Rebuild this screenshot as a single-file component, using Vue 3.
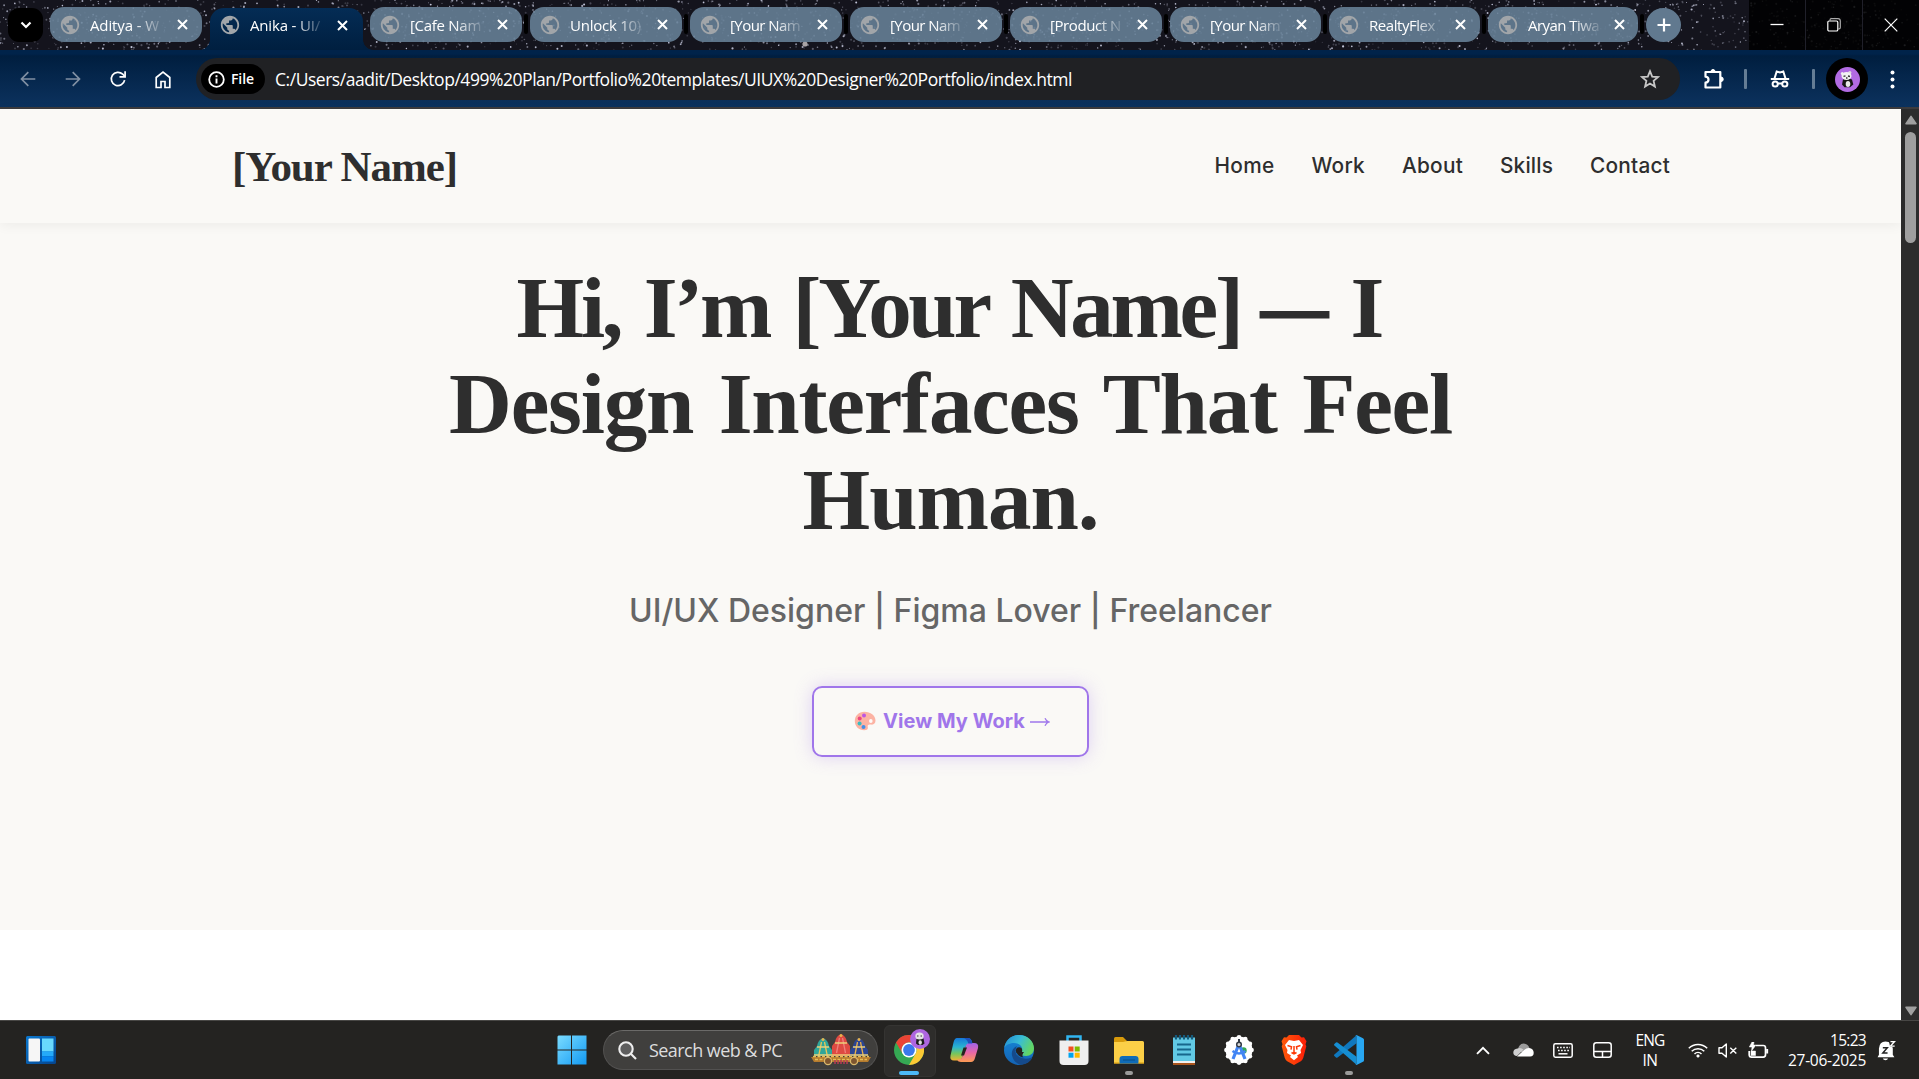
<script setup>
const tabs = [
  { title: 'Aditya - W', w: 69, size: 160 },
  { title: 'Anika - UI/', w: 70, size: 160, active: true },
  { title: '[Cafe Nam', w: 71, size: 160 },
  { title: 'Unlock 10)', w: 71, size: 160 },
  { title: '[Your Nam', w: 70, size: 160 },
  { title: '[Your Nam', w: 70, size: 160 },
  { title: '[Product N', w: 71, size: 160 },
  { title: '[Your Nam', w: 70, size: 159 },
  { title: 'RealtyFlex', w: 66, size: 159 },
  { title: 'Aryan Tiwa', w: 71, size: 158 },
]

const nav = [
  { label: 'Home', w: 60 },
  { label: 'Work', w: 53.5 },
  { label: 'About', w: 61 },
  { label: 'Skills', w: 53 },
  { label: 'Contact', w: 80 },
]

// Adjusts tracking so a label occupies its intended width.
const vFit = {
  mounted(el, { value }) {
    const natural = el.getBoundingClientRect().width
    const count = el.textContent.trim().length
    el.style.letterSpacing = `${((value - natural) / count).toFixed(4)}px`
  },
}

// Deterministic star field behind the tab strip.
let seed = 4711
const rand = () => {
  seed = (seed * 1664525 + 1013904223) % 4294967296
  return seed / 4294967296
}
const stars = Array.from({ length: 2600 }, () => {
  const bright = rand()
  return {
    x: (rand() * 1919).toFixed(1),
    y: (rand() * 50).toFixed(1),
    r: (0.5 + rand() * 0.6).toFixed(2),
    o: (0.2 + bright * bright * 0.8).toFixed(2),
  }
})

const teeth = Array.from({ length: 12 }, (_, i) => {
  const a = (i * Math.PI) / 6
  return { x: 15 + Math.cos(a) * 12.6, y: 15 + Math.sin(a) * 12.6 }
})
</script>

<template>
  <div class="screen">
    <header class="strip">
      <svg class="stars" width="1919" height="50" aria-hidden="true">
        <circle v-for="(s, i) in stars" :key="i" :cx="s.x" :cy="s.y" :r="s.r" fill="#c3c6da" :opacity="s.o" />
        <circle cx="805" cy="44" r="2.6" fill="#d9d4d4" opacity=".75" />
      </svg>
      <div class="tab-search">
        <svg width="12" height="8" viewBox="0 0 12 8"><path d="M1.500 1.500 6 6l4.500-4.500" fill="none" stroke="#fff" stroke-width="2.200" /></svg>
      </div>
      <div class="tabs">
        <div v-for="(t, i) in tabs" :key="i" class="slot" :class="{ active: t.active, divided: i > 1 }" :style="{ width: t.size + 'px' }">
          <div class="tab">
            <svg class="globe" width="22" height="22" viewBox="0 0 24 24">
              <path fill="currentColor" d="M12 2C6.480 2 2 6.480 2 12s4.480 10 10 10 10-4.480 10-10S17.520 2 12 2zm-1 17.930c-3.950-.49-7-3.850-7-7.930 0-.62.08-1.210.21-1.790L9 15v1c0 1.100.9 2 2 2v1.930zm6.900-2.540c-.26-.81-1-1.390-1.900-1.390h-1v-3c0-.55-.45-1-1-1H8v-2h2c.55 0 1-.45 1-1V7h2c1.100 0 2-.9 2-2v-.41c2.930 1.190 5 4.060 5 7.410 0 2.080-.8 3.970-2.100 5.390z" />
            </svg>
            <span class="title"><span v-fit="t.w" class="fit">{{ t.title }}</span></span>
            <svg class="close" width="11" height="11" viewBox="0 0 11 11"><path d="M1 1l9 9M10 1l-9 9" stroke="#fff" stroke-width="2" /></svg>
          </div>
          <template v-if="t.active">
            <i class="flare left"></i><i class="flare right"></i>
          </template>
        </div>
      </div>
      <div class="new-tab">
        <svg width="14" height="14" viewBox="0 0 14 14"><path d="M7 .5v13M.5 7h13" stroke="#fff" stroke-width="2.200" /></svg>
      </div>
      <div class="controls">
        <div><svg width="14" height="14" viewBox="0 0 14 14"><path d="M.5 6.500h13" stroke="#fff" stroke-width="1.300" /></svg></div>
        <div>
          <svg width="14" height="14" viewBox="0 0 14 14" fill="none" stroke="#fff" stroke-width="1.200">
            <path d="M3 2.500V2Q3 .7 4.300.7H11Q13.300.7 13.300 3v6.500q0 1.300-1.300 1.300h-.5" stroke="#aaa" />
            <rect x=".8" y="3" width="10" height="10" rx="1.300" />
          </svg>
        </div>
        <div><svg width="14" height="14" viewBox="0 0 14 14"><path d="M.7.7l12.600 12.600M13.300.7L.7 13.300" stroke="#fff" stroke-width="1.200" /></svg></div>
      </div>
    </header>

    <div class="toolbar">
      <div class="tool dim"><svg width="16" height="16" viewBox="0 0 16 16"><path d="M15.300 8H2M8.300 1.200 1.500 8l6.800 6.800" /></svg></div>
      <div class="tool dim"><svg width="16" height="16" viewBox="0 0 16 16"><path d="M.7 8H14M7.700 1.200 14.500 8l-6.800 6.800" /></svg></div>
      <div class="tool"><svg width="18" height="18" viewBox="0 0 18 18"><path d="M15.600 10.200A6.700 6.700 0 1 1 13.700 4.200L15.500 6" stroke-width="2.100" /><path d="M16.100 1.200v5.600h-5.600" stroke-width="2.100" /></svg></div>
      <div class="tool"><svg width="18" height="19" viewBox="0 0 18 19"><path d="M2.200 17.500V7.500L9 2l6.800 5.500v10H11v-6H7v6z" stroke-width="2.100" /></svg></div>
      <div class="omnibox">
        <div class="chip">
          <svg width="17" height="17" viewBox="0 0 17 17" fill="none" stroke="#fff"><circle cx="8.500" cy="8.500" r="7.300" stroke-width="1.800" /><path d="M8.500 7.600v5M8.500 4.300v1.900" stroke-width="1.900" /></svg>
          <span v-fit="23" class="fit">File</span>
        </div>
        <span class="url"><span v-fit="797" class="fit">C:/Users/aadit/Desktop/499%20Plan/Portfolio%20templates/UIUX%20Designer%20Portfolio/index.html</span></span>
        <svg class="fav" width="20" height="20" viewBox="0 0 20 20"><path d="M10 2.200l2.200 5.400 5.800.5-4.400 3.800 1.300 5.700L10 14.500l-4.900 3.100 1.300-5.700L2 8.100l5.800-.5z" fill="none" stroke="#c7c7c7" stroke-width="1.800" /></svg>
      </div>
      <div class="right-tools">
        <svg width="22" height="22" viewBox="0 0 22 22" fill="none" stroke="#fff" stroke-width="2.200" stroke-linejoin="round"><path d="M2.500 4h14.800v15.500H2.500v-4.800q3-.4 3-3t-3-3z" /><path d="M8 3.500a2 2 0 0 1 4 0zM18 9a2 2 0 0 1 0 4.500z" fill="#fff" stroke-width="1" /></svg>
        <i class="sep"></i>
        <svg width="20" height="18" viewBox="0 0 20 18" fill="none" stroke="#fff" stroke-width="2"><path d="M.8 9h18.400M4.500 8.500 6.700 1.500l3.300 1 3.300-1 2.200 7" /><circle cx="5.200" cy="14" r="2.600" /><circle cx="14.800" cy="14" r="2.600" /><path d="M8 13.500h4" /></svg>
        <i class="sep"></i>
        <div class="avatar">
          <svg width="25" height="25" viewBox="0 0 25 25"><circle cx="12.500" cy="12.500" r="12.500" fill="#b26be3" /><path d="M8 12.500q4.500-2 9 0l1.300 5-3.300 2.800H9.500L7 17.500z" fill="#161616" /><ellipse cx="13" cy="17" rx="2.300" ry="3" fill="#e9e9e9" /><circle cx="7.300" cy="6.500" r="1.500" fill="#eee" /><circle cx="14.800" cy="5.500" r="1.600" fill="#ddd" /><ellipse cx="11.500" cy="9" rx="5" ry="4" fill="#f2f2f2" /><path d="M8.500 9.300l2-.5M13 9l2 .5M11 11h1.500" stroke="#333" stroke-width="1.300" /></svg>
        </div>
        <svg width="5" height="19" viewBox="0 0 5 19" fill="#fff"><circle cx="2.500" cy="2.500" r="2" /><circle cx="2.500" cy="9.500" r="2" /><circle cx="2.500" cy="16.500" r="2" /></svg>
      </div>
    </div>

    <div class="viewport">
      <div class="page">
        <div class="site-header">
          <div class="logo"><span v-fit="225" class="fit">[Your Name]</span></div>
          <nav>
            <a v-for="n in nav" :key="n.label"><span v-fit="n.w" class="fit">{{ n.label }}</span></a>
          </nav>
        </div>
        <section class="hero">
          <h1>
            <span class="line first"><span v-fit="724" class="fit">Hi, I’m [Your Name]</span> <span class="dash">—</span> <span class="fit">I</span></span>
            <span class="line"><span v-fit="1003" class="fit">Design Interfaces That Feel</span></span>
            <span class="line"><span v-fit="296" class="fit">Human.</span></span>
          </h1>
          <p><span v-fit="643" class="fit">UI/UX Designer | Figma Lover | Freelancer</span></p>
          <a class="cta">
            <svg width="22" height="20" viewBox="0 0 22 20">
              <path d="M10.500.7C4.800.7.8 4.700.8 10c0 5.400 4.200 9.300 9.300 9.300 3 0 4.300-1.300 3.700-3.300-.6-1.900.7-3 2.900-2.500 2.700.6 4.800-.8 4.800-4C21.500 4.300 16.500.7 10.500.7z" fill="#fcb3a3" />
              <ellipse cx="16.800" cy="10" rx="1.800" ry="2.100" fill="#fffaf8" />
              <circle cx="10" cy="4.400" r="2" fill="#bd55e3" /><circle cx="5.700" cy="7.600" r="2" fill="#ec477f" /><circle cx="5.600" cy="12.600" r="2" fill="#36bcc2" /><circle cx="9.500" cy="15.900" r="2" fill="#448fe8" />
            </svg>
            <span class="cta-text"><span v-fit="142" class="fit">View My Work</span></span>
            <svg class="arrow" width="20" height="10" viewBox="0 0 20 10"><path d="M0 5h18.500M15 1.200Q16.200 4.200 19 5q-2.800.8-4 3.800" fill="none" stroke="#9f77eb" stroke-width="1.300" /></svg>
          </a>
        </section>
        <section class="next"></section>
      </div>
      <div class="scrollbar">
        <svg width="12" height="10" viewBox="0 0 12 10"><path d="M6 1.300 11 8.700H1z" fill="#a0a0a0" stroke="#a0a0a0" stroke-width="1.500" stroke-linejoin="round" /></svg>
        <i class="thumb"></i>
        <svg width="12" height="10" viewBox="0 0 12 10"><path d="M6 8.700 11 1.300H1z" fill="#a0a0a0" stroke="#a0a0a0" stroke-width="1.500" stroke-linejoin="round" /></svg>
      </div>
    </div>

    <footer class="taskbar">
      <div class="widgets">
        <svg width="30" height="28" viewBox="0 0 30 28"><defs><linearGradient id="wd" x1="0" y1="0" x2="1" y2="1"><stop stop-color="#0a78d0" /><stop offset="1" stop-color="#06448c" /></linearGradient></defs><rect width="30" height="28" rx="1.500" fill="url(#wd)" /><rect x="2.500" y="2.500" width="11.500" height="23" rx="1" fill="#f6f6f6" /><rect x="16" y="2.500" width="11.500" height="13" fill="#69d9fd" /><rect x="16" y="15.300" width="11.500" height="5" fill="#25aaf9" /><rect x="16" y="20.300" width="11.500" height="5.200" fill="#0785f0" /></svg>
      </div>
      <div class="center">
        <svg class="start" width="30" height="30" viewBox="0 0 30 30"><defs><linearGradient id="wn" x1="0" y1="0" x2="1" y2="1" gradientUnits="objectBoundingBox"><stop stop-color="#7bdcff" /><stop offset="1" stop-color="#1299f3" /></linearGradient></defs><path d="M1.500.5H14v14H.5v-13zM15 .5h14.500v14H15zM.5 15.500H14v14H.5zM15 15.500h14.500v14H15z" fill="url(#wn)" /></svg>
        <div class="search">
          <svg width="19" height="19" viewBox="0 0 19 19" fill="none" stroke="#eee" stroke-width="2.100"><circle cx="8" cy="8" r="6.700" fill="#5e5e5e" /><path d="M12.800 12.800l5.200 5.200" /></svg>
          <span class="search-text"><span v-fit="133" class="fit">Search web &amp; PC</span></span>
          <svg class="art" width="62" height="32" viewBox="0 0 62 32">
            <path d="M1 23h60l-3 5H4z" fill="#b57b2e" />
            <path d="M3 22.500h56M5 25.500h52" stroke="#e6bd57" stroke-width="1.500" stroke-dasharray="3 1.500" />
            <g v-for="(c, i) in [['#2fa69a', '#e6c65a', 13, 4], ['#de4a42', '#f07e7a', 31, 0], ['#2b4593', '#e7b04b', 49, 4]]" :key="i">
              <path :d="`M${c[2]} ${c[3]}q5 2 6 8l3 4V22H${c[2] - 9}V${c[3] + 12}l3-4q1-6 6-8z`" :fill="c[0]" />
              <path :d="`M${c[2] - 1.5} ${c[3] + 4}l-3 15M${c[2] + 1.5} ${c[3] + 4}l3 15`" :stroke="c[1]" stroke-width="1.300" />
              <path :d="`M${c[2] - 6} ${c[3] + 9}h12M${c[2] - 9} 21h18`" stroke="#ecd079" stroke-width="1.400" />
              <circle :cx="c[2]" :cy="c[3] + 1.5" r="1.500" fill="#e8b34c" />
            </g>
            <g fill="#7d5530" stroke="#d9b86c" stroke-width="1.300"><circle cx="18" cy="27" r="3.600" /><circle cx="44" cy="27" r="3.600" /></g>
            <path d="M25 26v4m3-4v4m3-4v4m3-4v4m3-4v4" stroke="#b63b54" stroke-width="1.500" />
          </svg>
        </div>
        <div class="apps">
          <div class="app current">
            <svg width="30" height="30" viewBox="0 0 30 30"><circle cx="15" cy="15" r="15" fill="#35a853" /><path d="M2 7.500A15 15 0 0 1 28 7.500H15A7.500 7.500 0 0 0 8.500 18.700z" fill="#ea4335" /><path d="M28 7.500A15 15 0 0 1 15 30l6.500-11.200A7.500 7.500 0 0 0 15 7.500z" fill="#fcc934" /><circle cx="15" cy="15" r="7.500" fill="#fff" /><circle cx="15" cy="15" r="5.900" fill="#3b79ec" /></svg>
            <svg class="badge" width="20" height="20" viewBox="0 0 20 20"><circle cx="10" cy="10" r="10" fill="#ae66df" /><path d="M6.500 9.500h7l1 5-2 1.500H8l-2-1.500z" fill="#1c1c1c" /><ellipse cx="9.500" cy="7" rx="4.200" ry="3.500" fill="#e4e4e4" /><ellipse cx="10.200" cy="13.500" rx="1.700" ry="2.200" fill="#ddd" /><path d="M7 7h1.500M10.500 7H12" stroke="#333" /></svg>
            <i class="run wide"></i>
          </div>
          <div class="app">
            <svg width="30" height="30" viewBox="0 0 30 30"><defs><linearGradient id="ca" x1="0" y1="0" x2="0" y2="1"><stop stop-color="#1678d8" /><stop offset=".4" stop-color="#29b3d1" /><stop offset=".7" stop-color="#77c65c" /><stop offset="1" stop-color="#f1b332" /></linearGradient><linearGradient id="cb" x1="0" y1="0" x2="0" y2="1"><stop stop-color="#a063e8" /><stop offset=".5" stop-color="#e767a7" /><stop offset="1" stop-color="#fc9b52" /></linearGradient></defs><path d="M8 3h11q3 0 4 4l.7 2.500H20q-3 0-4 3.500l-3 10q-.8 2.500-4 2.500H5q-4.500 0-3.500-5l3-13Q5.500 3 8 3z" fill="url(#ca)" /><path d="M22 27H12q-3 0-4-2.500h2q2.500 0 3.400-3l3-9.500q.9-4 4.600-4h4q5 0 4 5l-3 10Q25 27 22 27z" fill="url(#cb)" /><path d="M13 3h6q3 0 4 4l.3 1.500h-4q-1.300-5.500-6.300-5.500z" fill="#1c50bc" /><path d="M14.500 12.500h3.500l-3 8h-3z" fill="#25221f" /></svg>
          </div>
          <div class="app">
            <svg width="30" height="30" viewBox="0 0 30 30"><defs><linearGradient id="ea" x1="0" y1="0" x2="1" y2=".4"><stop stop-color="#2289d5" /><stop offset=".55" stop-color="#39bdd5" /><stop offset="1" stop-color="#62d565" /></linearGradient><linearGradient id="eb" x1="0" y1="0" x2="0" y2="1"><stop stop-color="#1688d8" /><stop offset="1" stop-color="#1463b4" /></linearGradient></defs><circle cx="15" cy="15" r="15" fill="url(#eb)" /><path d="M.2 13C1.500 5 7.500 0 15 0c8.500 0 15 6 15 13.300 0 5-3.800 7.700-7.800 7.700-3.700 0-6-1.300-6-2.500 0-1 2-1.300 2-4.500C18 10.500 14 8 10 8 5 8 1.500 10.500.2 13z" fill="url(#ea)" /><path d="M12 11.500c-3 1.500-4.800 5-4 9 1 5 5 8.800 9.500 9.300 5-.4 8.500-3 10.500-6.300.4-.8-.2-1.200-1-.8-6 2.600-14.500 0-15.500-6-.3-2 .5-4 1.500-5.200z" fill="#154a8b" /><circle cx="15" cy="15.500" r="3.200" fill="#25221f" /><path d="M15 17h5q-3 4-.5 5.500-6-1-7-6z" fill="#25221f" /></svg>
          </div>
          <div class="app">
            <svg width="30" height="30" viewBox="0 0 30 30"><path d="M8.500 7V1.500h13V7" fill="none" stroke="#31b5f0" stroke-width="2.500" /><path d="M.5 5.500h29V26q0 4-4 4h-21q-4 0-4-4z" fill="#efefef" /><path d="M9.500 11.500h5v5h-5z" fill="#f25022" /><path d="M15.700 11.500h5v5h-5z" fill="#7fba00" /><path d="M9.500 17.700h5v5h-5z" fill="#00a4ef" /><path d="M15.700 17.700h5v5h-5z" fill="#ffb900" /></svg>
          </div>
          <div class="app">
            <svg width="30" height="30" viewBox="0 0 30 30"><path d="M0 3.500Q0 2 1.500 2H9l3.500 3.500V10H0z" fill="#d89a0b" /><path d="M0 7h9l4-1h15.500Q30 6 30 7.500v21H0z" fill="#fccf47" /><path d="M5.500 28.500V24q0-3 3-3h13q3 0 3 3v4.500z" fill="#0f6cb8" /><path d="M9 25h12" stroke="#084e86" /><path d="M0 28h5.500M24.500 28H30" stroke="#d89a0b" /></svg>
            <i class="run"></i>
          </div>
          <div class="app">
            <svg width="24" height="30" viewBox="0 0 24 30"><path d="M1 2.500h22V26H1z" fill="#61c9e4" /><path d="M1 26h22v2H1z" fill="#f1efee" /><path d="M1 28h22v2H1z" fill="#a9541c" /><path d="M5 9.500h14M5 14.500h14M5 19.500h14" stroke="#17678c" stroke-width="2" /><path d="M4 0v4.500M8 0v4.500M12 0v4.500M16 0v4.500M20 0v4.500" stroke="#145a7c" stroke-width="2.200" /></svg>
          </div>
          <div class="app">
            <svg width="30" height="30" viewBox="0 0 30 30"><circle cx="15" cy="15" r="13.400" fill="#fff" /><circle v-for="(t, i) in teeth" :key="i" :cx="t.x" :cy="t.y" r="2.300" fill="#fff" /><circle cx="19.500" cy="15.500" r="3.200" fill="#34a853" /><path d="M15 9l-6 15M15 9l6 15" stroke="#4285f4" stroke-width="3.200" /><path d="M8.500 16q6.500 5 13 0" fill="none" stroke="#4285f4" stroke-width="2.400" /><circle cx="15" cy="9.500" r="2.300" fill="#d7d7d7" stroke="#333b46" stroke-width="1.500" /><path d="M15 4v3" stroke="#333b46" stroke-width="2" /></svg>
          </div>
          <div class="app">
            <svg width="26" height="30" viewBox="0 0 26 30"><defs><linearGradient id="br"><stop stop-color="#ff5a0a" /><stop offset="1" stop-color="#fb1d08" /></linearGradient></defs><path d="M8 0h10l2.500 2.500 2.500-.3 2.500 4-1 3 .8 2-3 11.500q-.8 2.300-2.500 3.500L13 30l-6.800-3.800q-1.700-1.200-2.500-3.500L.7 11.200l.8-2-1-3 2.500-4 2.500.3z" fill="url(#br)" /><path d="M8 5l5 1 5-1 4 5-2.500 5 .5 3-4 2.500L17 22l-4 3.200L9 22l1-1.500L6 18l.5-3L4 10z" fill="#fff" /><path d="M6.500 10.500l4 1.200-.5 3M19.500 10.500l-4 1.200.5 3M13 11v7M10.500 17.500l2.500 1.500 2.500-1.500" fill="none" stroke="#fd3b09" stroke-width="1.500" /></svg>
          </div>
          <div class="app">
            <svg width="30" height="30" viewBox="0 0 30 30"><path d="M22.500.2V8.300L3.500 22.500q-.8.500-1.500 0L.4 21q-.8-.8 0-1.600z" fill="#1078be" /><path d="M22.500 29.800v-8.100L3.500 7.500Q2.700 7 2 7.500L.4 9q-.8.800 0 1.600z" fill="#168ed2" /><path d="M22.500 0L29 3.200q1 .5 1 1.600v20.400q0 1.100-1 1.600L22.500 30q-1 .2-1.500-.5 1.500.7 1.500-1V1.500q0-1.700-1.500-1Q21.500-.2 22.500 0z" fill="#28a7f2" /></svg>
            <i class="run"></i>
          </div>
        </div>
      </div>
      <div class="tray">
        <div class="cell"><svg width="14" height="9" viewBox="0 0 14 9"><path d="M1 7.800 7 1.800l6 6" fill="none" stroke="#fff" stroke-width="1.900" /></svg></div>
        <div class="cell"><svg width="21" height="14" viewBox="0 0 21 14"><path d="M5 7Q5.500 1 10.500.5 14.500.5 16.500 5L18 9H2z" fill="#9c9c9c" /><path d="M4.500 5.500q3-1.500 6 1L4 13Q.3 12.800.3 9.500T4.500 5.500z" fill="#cfcfcf" /><path d="M4 13.500l6-5.500q3-3 6-3 4.700.8 4.700 4.700T17 13.500z" fill="#fff" /></svg></div>
        <div class="cell"><svg width="20" height="15" viewBox="0 0 20 15" fill="none" stroke="#fff"><rect x=".8" y=".8" width="18.400" height="13.400" rx="1.600" stroke-width="1.500" /><path d="M4 4.500h13M5 7.500h11" stroke-width="1.600" stroke-dasharray="1.600 1.500" /><path d="M5.500 10.800h9" stroke-width="1.500" /></svg></div>
        <div class="cell"><svg width="19" height="16" viewBox="0 0 19 16" fill="none" stroke="#fff" stroke-width="1.500"><rect x=".8" y=".8" width="17.400" height="14.400" rx="2.500" /><path d="M1 9.500h17M9.500 9.500V15" /></svg></div>
        <div class="lang"><span><span v-fit="29" class="fit">ENG</span></span><span><span v-fit="15" class="fit">IN</span></span></div>
        <div class="status">
          <svg width="20" height="15" viewBox="0 0 20 15" fill="none" stroke="#fff" stroke-width="1.500"><path d="M.8 5.300a13 13 0 0 1 18.400 0M3.700 8.200a9 9 0 0 1 12.600 0M6.500 11a5 5 0 0 1 7 0" /><circle cx="10" cy="13" r="1.300" fill="#fff" stroke-width=".5" /></svg>
          <svg width="20" height="15" viewBox="0 0 20 15" fill="none" stroke="#fff" stroke-width="1.400"><path d="M1 4.800h3L8.300 1v13L4 10.200H1zM12.300 4.800l6 5.800M18.300 4.800l-6 5.800" stroke-linejoin="round" /></svg>
          <svg width="21" height="17" viewBox="0 0 21 17" fill="none" stroke="#fff"><path d="M8 3.500h7.200q2.300 0 2.300 2.300v7q0 2.300-2.300 2.300H3.500q-2.300 0-2.300-2.300V9M19.300 7v4.500" stroke-width="1.700" /><path d="M3 9h4.500V13.500H3zM4 0h2L5.500 3h2.500L3.500 9l.5-4H1.300z" fill="#fff" stroke-width=".5" /></svg>
        </div>
        <div class="clock"><span><span v-fit="36" class="fit">15:23</span></span><span><span v-fit="78" class="fit">27-06-2025</span></span></div>
        <svg class="bell" width="19" height="21" viewBox="0 0 18 20"><path d="M1.800 14V8Q2.300 1.800 8 1.500q6.500.3 7 6.500v6l1.500 2.500h-16z" fill="#fff" /><path d="M5.500 17.500a2.600 2.300 0 0 0 5 0z" fill="#fff" /><path d="M5.500 7.300h4.300l-4.300 5h4.500" fill="none" stroke="#222" stroke-width="1.400" /><path d="M11 0H18v6.500h-5.500z" fill="#242321" /><path d="M12.800 1.500h3.800l-3.800 4.300h4" fill="none" stroke="#fff" stroke-width="1.300" /></svg>
      </div>
    </footer>
  </div>
</template>

<style>
body { margin: 0; overflow: hidden; }
</style>

<style scoped>
.screen { width: 1919px; height: 1079px; display: flex; flex-direction: column; overflow: hidden; font-family: "Open Sans", "Noto Sans", sans-serif; }
.screen * { box-sizing: border-box; }
.fit { display: inline-block; white-space: nowrap; }
svg { display: block; flex: none; }

.strip { position: relative; height: 50px; flex: none; display: flex; background: #14141d; }
.stars { position: absolute; left: 0; top: 0; }
.strip > div { position: relative; flex: none; }
.tab-search { width: 35px; height: 34px; margin: 8px 7px 0 8px; border-radius: 11px; background: #000; display: flex; align-items: center; justify-content: center; }
.tabs { display: flex; width: 1596px; height: 50px; }
.slot { position: relative; flex: none; padding-right: 8px; }
.slot.divided::after { content: ""; position: absolute; right: 2px; top: 14px; width: 4px; height: 20px; border-radius: 2px; background: #000; }
.tab { height: 35px; margin-top: 7px; border-radius: 14px; background: rgba(104, 131, 154, .87); display: flex; align-items: center; padding-left: 9px; overflow: hidden; }
.slot.active { z-index: 2; }
.active .tab { height: 42px; margin-top: 8px; padding-bottom: 8px; border-radius: 14px 14px 0 0; background: linear-gradient(#042c55, #001f40); margin-right: -1px; }
.flare { position: absolute; bottom: 0; width: 10px; height: 10px; }
.flare.left { left: -10px; background: radial-gradient(circle at 0 0, transparent 9.500px, #001f40 10px); }
.flare.right { right: -3px; background: radial-gradient(circle at 100% 0, transparent 9.500px, #001f40 10px); }
.globe { color: #a1a5a9; }
.title { width: 82px; margin-left: 9px; font-size: 15px; line-height: 22px; color: #fff; overflow: hidden; -webkit-mask-image: linear-gradient(90deg, #000 45px, transparent 76px); mask-image: linear-gradient(90deg, #000 45px, transparent 76px); }
.close { margin-left: 5px; }
.slot:nth-child(n + 8) .close { margin-left: 4px; }
.new-tab { width: 35px; height: 34px; margin-top: 8px; border-radius: 50%; background: #61798f; display: flex; align-items: center; justify-content: center; }
.controls { display: flex; margin-left: 68px; width: 170px; height: 50px; background: rgba(0, 0, 0, .86); }
.controls div { width: 57px; flex: none; display: flex; align-items: center; justify-content: center; border-right: 1px solid #20202a; }

.toolbar { height: 59px; flex: none; display: flex; align-items: center; padding: 1px 0 0 5px; background: linear-gradient(#00234a 0, #00234a 4px, #001e3f 6px, #0c325e 57px); border-bottom: 2px solid #3c3b3d; }
.tool { width: 45px; height: 40px; display: flex; align-items: center; justify-content: center; }
.tool path { fill: none; stroke: #fff; stroke-width: 1.700; }
.dim path { stroke: #8190a3; }
.omnibox { width: 1484px; height: 42px; margin-left: 11px; border-radius: 21px; background: #202124; display: flex; align-items: center; padding-left: 5px; }
.chip { width: 64px; height: 30px; border-radius: 15px; background: #000; color: #fff; display: flex; align-items: center; padding-left: 7px; gap: 6px; font-size: 14px; font-weight: 600; line-height: 20px; }
.url { margin-left: 10px; width: 1364px; color: #fff; font-size: 17.500px; line-height: 26px; }
.fav { margin-left: 1px; }
.right-tools { display: flex; align-items: center; margin-left: 23px; }
.sep { width: 3px; height: 20px; border-radius: 1px; background: #657d95; }
.right-tools svg + .sep { margin-left: 19px; }
.sep + svg { margin-left: 23px; }
.avatar { width: 42px; height: 42px; border-radius: 50%; background: #000; display: flex; align-items: center; justify-content: center; margin: 0 22px 0 11px; }
.right-tools .sep + svg + .sep { margin-left: 22px; }

.viewport { height: 911px; flex: none; display: flex; }
.page { width: 1901px; flex: none; display: flex; flex-direction: column; color: #2e2e2e; }
.site-header { position: relative; z-index: 1; height: 114px; flex: none; display: flex; align-items: center; justify-content: space-between; padding: 0 231px; background: #faf9f6; box-shadow: 0 2px 12px rgba(0, 0, 0, .06); }
.logo { font-family: "Liberation Serif", serif; font-weight: 700; font-size: 43px; line-height: 52px; padding: 1px 0 0 1px; }
nav { display: flex; gap: 37px; font-family: Inter, sans-serif; font-size: 20.800px; font-weight: 500; line-height: 32px; }
.hero { height: 707px; flex: none; background: #faf9f6; display: flex; flex-direction: column; align-items: center; padding-top: 37px; }
h1 { margin: 0; font-family: "Liberation Serif", serif; font-weight: 700; font-size: 87px; line-height: 96px; text-align: center; word-spacing: 5px; }
.line { display: block; height: 96px; }
.first { display: flex; justify-content: center; }
.dash { width: 66px; margin: 0 23px 0 21px; font-size: 66px; -webkit-text-stroke: 3px #2e2e2e; }
.hero p { margin: 39px 0 0; font-family: Inter, sans-serif; font-weight: 500; font-size: 32px; line-height: 48px; color: #666; }
.cta { margin-top: 51px; width: 277px; height: 71px; border: 2px solid #a076ea; border-radius: 10px; box-shadow: 0 0 18px rgba(160, 118, 234, .3); display: flex; align-items: center; padding: 0 0 2px 40px; color: #a076ea; font-family: Inter, sans-serif; font-weight: 700; font-size: 20px; line-height: 30px; }
.cta-text { margin-left: 7px; }
.arrow { margin: 3px 0 0 5px; }
.next { height: 90px; background: #fff; }
.scrollbar { width: 18px; background: #2c2c2c; display: flex; flex-direction: column; align-items: center; padding: 6px 0 4px 1px; }
.thumb { width: 11px; height: 111px; margin: 7px 0 auto; border-radius: 6px; background: #9f9f9f; }

.taskbar { position: relative; height: 59px; flex: none; display: flex; background: #242321; border-top: 1px solid #484745; color: #fff; }
.widgets { width: 557px; padding: 15px 0 0 26px; }
.center { display: flex; align-items: center; width: 820px; }
.search { width: 275px; height: 40px; margin-left: 16px; border-radius: 20px; border: 1px solid #525150; border-top-color: #6b6a68; background: #403f3d; display: flex; align-items: center; padding-left: 14px; }
.search-text { margin-left: 12px; width: 161px; font-size: 18px; line-height: 26px; color: #ddd; }
.apps { display: flex; margin-left: 3px; }
.app { position: relative; width: 55px; height: 58px; display: flex; align-items: center; justify-content: center; }
.current::before { content: ""; position: absolute; left: 3px; top: 4px; width: 50px; height: 50px; border-radius: 6px; background: #2e2d2b; border: 1px solid #353432; }
.app svg { position: relative; }
.app .badge { position: absolute; left: 29px; top: 8px; }
.run { position: absolute; bottom: 4px; left: 24px; width: 8px; height: 4px; border-radius: 2px; background: #9b9b9a; }
.run.wide { left: 18px; width: 20px; background: #4cb9f7; }
.tray { display: flex; align-items: center; margin-left: 86px; }
.cell { width: 40px; height: 58px; display: flex; align-items: center; justify-content: center; }
.cell:nth-child(4) { width: 38px; }
.lang { width: 58px; display: flex; flex-direction: column; align-items: center; font-size: 15.500px; line-height: 20px; }
.status { display: flex; align-items: center; gap: 10px; margin-left: 9px; }
.clock { width: 97px; display: flex; flex-direction: column; align-items: flex-end; font-size: 15.500px; line-height: 20px; padding-bottom: 1px; }
.bell { margin-left: 11px; }
</style>
